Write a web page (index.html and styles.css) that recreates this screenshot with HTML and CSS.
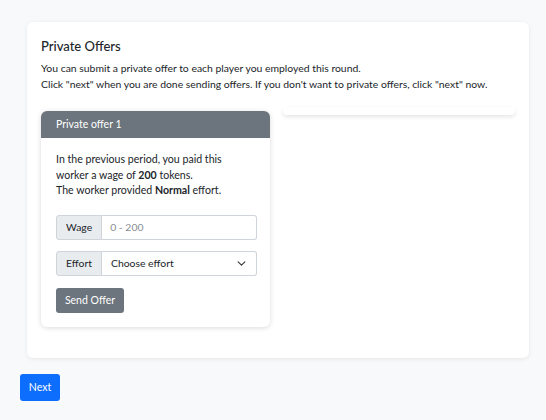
FILE: index.html
```html
<!DOCTYPE html>
<html>
<head>
<meta charset="utf-8">
<link rel="stylesheet" href="styles.css">
</head>
<body>
<div class="page">
  <div class="main-card">
    <h4 class="title">Private Offers</h4>
    <p class="intro">You can submit a private offer to each player you employed this round.<br>Click "next" when you are done sending offers. If you don't want to private offers, click "next" now.</p>
    <div class="offers">
      <div class="offer-card">
        <div class="offer-header">Private offer 1</div>
        <div class="offer-body">
          <p class="offer-text">In the previous period, you paid this<br>worker a wage of <b>200</b> tokens.<br>The worker provided <b>Normal</b> effort.</p>
          <div class="input-group">
            <span class="addon">Wage</span>
            <span class="field placeholder">0 - 200</span>
          </div>
          <div class="input-group">
            <span class="addon">Effort</span>
            <span class="field select">Choose effort
              <svg class="chev" width="9" height="9" viewBox="0 0 16 16"><path d="M2 5l6 6 6-6" fill="none" stroke="#343a40" stroke-width="2" stroke-linecap="round" stroke-linejoin="round"/></svg>
            </span>
          </div>
          <button class="btn btn-gray">Send Offer</button>
        </div>
      </div>
      <div class="empty-card"></div>
    </div>
  </div>
  <button class="btn btn-blue">Next</button>
</div>
</body>
</html>
```
FILE: styles.css
```css
html, body {
  margin: 0;
  padding: 0;
  background: #f8f9fa;
  font-family: "Lato", "Noto Sans", sans-serif;
  color: #212529;
  font-size: 10.4px;
  line-height: 1.5;
}
.page {
  padding: 22px 17px 0 20px;
}
.main-card {
  margin-left: 7px;
  width: 502px;
  box-sizing: border-box;
  background: #fff;
  border-radius: 6px;
  box-shadow: 0 1px 4px rgba(0,0,0,0.08);
  padding: 14px 14px 31px 14px;
}
.title {
  margin: 0 0 4px 0;
  font-size: 13px;
  font-weight: 500;
  line-height: 20px;
}
.intro {
  margin: 0 0 15px 0;
  line-height: 16px;
}
.offers {
  display: flex;
  gap: 13px;
  align-items: flex-start;
}
.offer-card {
  width: 229px;
  margin-top: 4px;
  border-radius: 6px;
  background: #fff;
  box-shadow: 0 1px 5px rgba(0,0,0,0.15);
  overflow: hidden;
}
.offer-header {
  background: #6c757d;
  color: #fff;
  padding: 0 15px;
  height: 27px;
  line-height: 27px;
  font-size: 10.5px;
}
.offer-body {
  padding: 14px 14px 14px 15px;
}
.offer-text {
  margin: 0 0 16px 0;
  line-height: 15.5px;
  font-size: 10.6px;
}
.offer-text b {
  font-weight: 700;
}
.input-group {
  display: flex;
  height: 25px;
  width: 201px;
  margin-bottom: 11px;
  box-sizing: border-box;
}
.addon {
  background: #e9ecef;
  border: 1px solid #ced4da;
  border-radius: 3px 0 0 3px;
  padding: 0 9px;
  line-height: 23px;
  color: #212529;
}
.field {
  flex: 1;
  border: 1px solid #ced4da;
  border-left: none;
  border-radius: 0 3px 3px 0;
  padding: 0 8px 0 9px;
  line-height: 23px;
  display: flex;
  align-items: center;
  justify-content: space-between;
}
.placeholder {
  color: #878d93;
  padding-left: 8px;
}
.chev {
  margin-right: 2px;
}
.btn {
  border: none;
  border-radius: 3px;
  color: #fff;
  font-family: inherit;
  font-size: 10.5px;
  line-height: 25px;
  height: 25px;
  padding: 0 8px;
  cursor: pointer;
}
.btn-gray {
  background: #6c757d;
  width: 68px;
  padding: 0;
  margin-top: 1px;
}
.btn-blue {
  background: #0d6efd;
  width: 40px;
  height: 27px;
  padding: 0;
  margin-top: 16px;
}
.empty-card {
  width: 232px;
  height: 8px;
  background: #fff;
  border-radius: 6px;
  box-shadow: 0 2px 4px rgba(0,0,0,0.1);
}
```
